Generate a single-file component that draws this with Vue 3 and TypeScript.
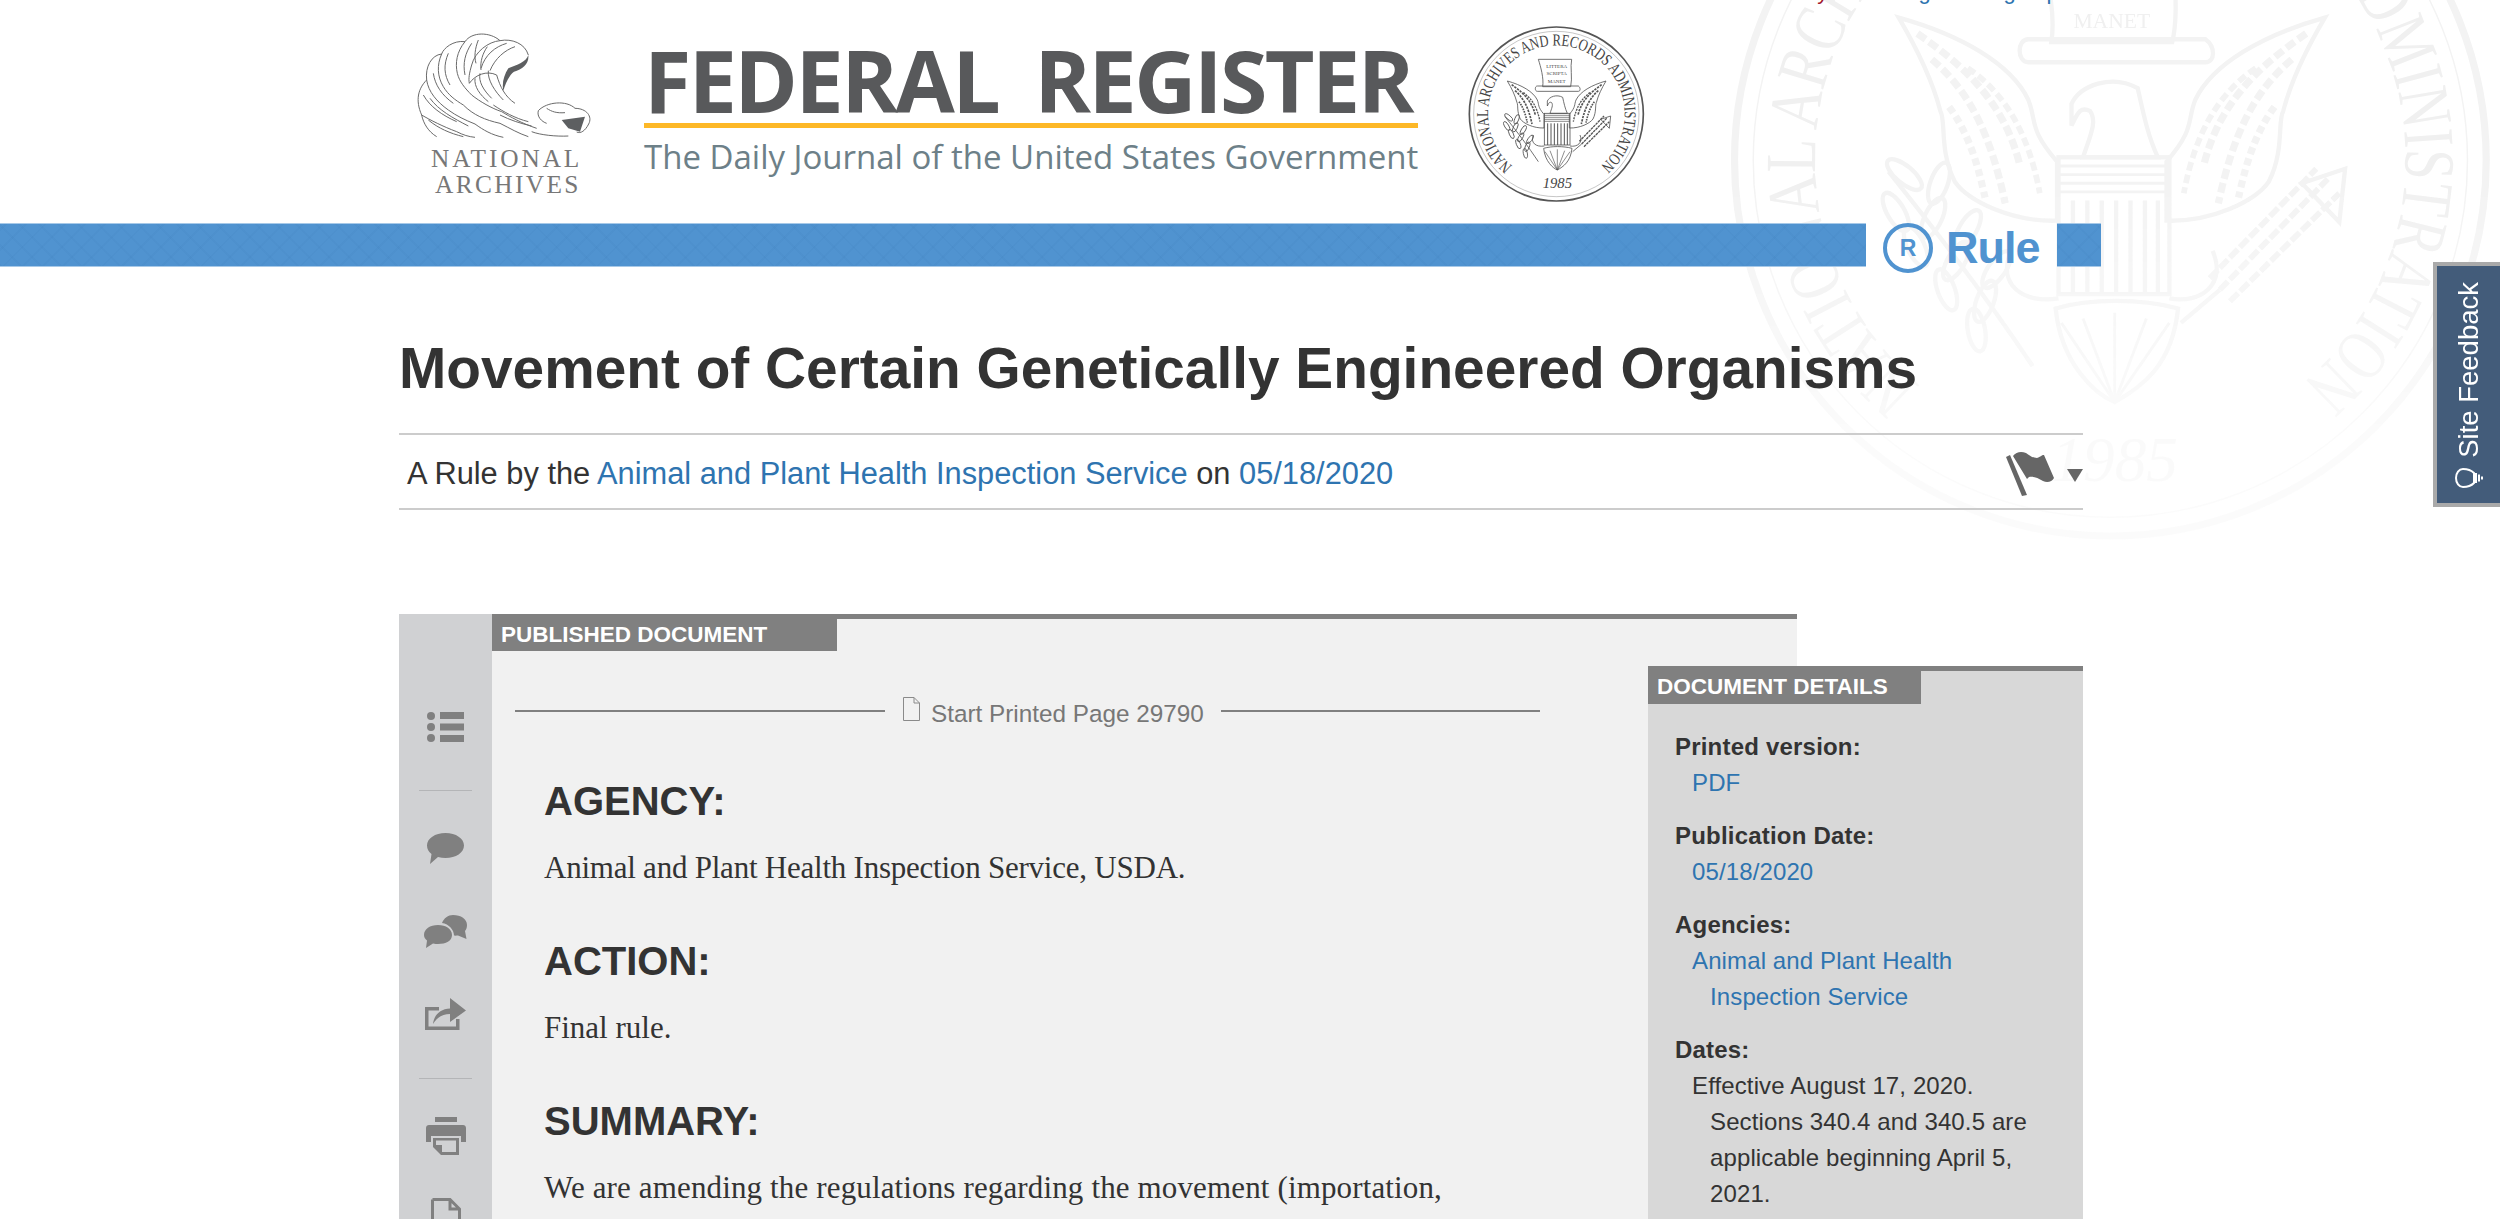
<script setup lang="ts">
interface Group { label: string; links?: string[]; lines?: string[] }

const details: Group[] = [
  { label: 'Printed version:', links: ['PDF'] },
  { label: 'Publication Date:', links: ['05/18/2020'] },
  { label: 'Agencies:', links: ['Animal and Plant Health Inspection Service'] },
  { label: 'Dates:', lines: ['Effective August 17, 2020. Sections 340.4 and 340.5 are applicable beginning April 5, 2021.'] },
]

const sections = [
  { title: 'AGENCY:', text: 'Animal and Plant Health Inspection Service, USDA.', track: -0.23 },
  { title: 'ACTION:', text: 'Final rule.', track: 0 },
  { title: 'SUMMARY:', text: 'We are amending the regulations regarding the movement (importation,', track: 0.14 },
]

const waveLines: string[] = [
  'M385 105C375 70 335 55 300 62C270 35 215 35 195 65C160 60 130 85 125 102C95 105 75 140 80 180C55 205 45 240 65 285C70 310 85 335 110 350',
  'M300 62C265 65 225 95 215 135C208 160 205 175 208 190',
  'M320 70C285 80 255 105 243 145',
  'M345 80C315 90 285 115 270 152',
  'M195 65C170 95 165 130 172 160C178 185 195 205 215 225',
  'M215 70C195 100 188 130 195 165',
  'M125 102C110 135 112 170 130 200C145 225 165 240 190 255',
  'M145 100C130 135 132 165 150 195',
  'M80 180C85 215 110 245 145 270C170 288 195 300 225 312',
  'M100 160C105 195 125 225 160 250',
  'M65 285C90 300 130 320 170 335C190 345 205 350 225 352',
  'M70 225C90 260 125 285 170 305',
  'M90 235C115 270 160 295 205 318',
  'M85 300C115 325 150 340 190 350',
  'M235 60C225 85 222 110 228 130',
  'M262 80C248 100 240 125 243 150',
  'M208 190C225 165 260 150 290 165C300 200 315 230 345 250',
  'M240 160C235 185 250 210 275 235',
  'M265 152C262 180 285 215 310 240',
  'M225 175C222 200 240 225 265 245',
  'M215 225C240 245 275 265 305 275C330 290 365 310 410 325',
  'M190 255C220 285 255 300 300 310C330 325 355 340 385 350',
  'M225 312C250 330 275 345 310 352',
  'M300 285C330 300 360 310 395 318',
  'M280 255C310 275 345 295 385 305',
  'M415 272C440 245 500 240 525 265C560 265 578 290 566 312C556 332 542 342 530 336',
  'M415 272C410 290 425 305 440 310',
  'M395 335C420 345 470 350 505 348',
  'M440 265C455 275 470 280 495 278',
]

const olive: { cx: number; cy: number; r: number }[] = [
  [176, 292, -50], [200, 298, 20], [170, 318, -30], [196, 322, 25], [220, 330, 30], [184, 342, -25], [212, 352, 30], [240, 358, 35], [205, 372, -20], [232, 380, 20], [226, 400, -10],
].map(([cx, cy, r]) => ({ cx, cy, r }))

const stripes: number[] = [293, 303, 313, 323, 333, 343, 352]
const bands: number[] = [286, 292, 298, 304]
const tail: string[] = [
  'M322 450L285 395', 'M322 450L300 392', 'M322 450L322 388', 'M322 450L344 392', 'M322 450L360 395',
]
</script>

<template>
  <div class="page">
    <svg class="defs" width="0" height="0" aria-hidden="true">
      <defs>
        <g id="wing">
          <path d="M172 183C215 195 250 215 262 240C268 255 262 260 282 283V324C250 325 220 310 211 297C200 275 205 255 201 248C195 225 185 205 172 183Z" />
          <path d="M185 194C215 215 245 240 256 285" stroke-dasharray="7 3" stroke-width="5" />
          <path d="M195 212C222 235 236 265 246 312" stroke-dasharray="7 3" stroke-width="5" />
          <path d="M207 245C222 265 228 290 232 308" stroke-dasharray="5 3" stroke-width="5" />
          <path d="M220 218C245 235 262 262 270 305" stroke-dasharray="6 3" stroke-width="4" />
        </g>
        <g id="seal">
          <circle cx="319" cy="282" r="261" stroke-width="5" />
          <circle cx="319" cy="282" r="248" stroke-width="1" />
          <path id="sealArc" d="M187.400 438.600A205 205 0 1 1 450.600 438.600" stroke="none" />
          <text class="seal-ring" fill="currentColor" stroke="none" font-size="50">
            <textPath href="#sealArc" textLength="1000" lengthAdjust="spacingAndGlyphs">NATIONAL ARCHIVES AND RECORDS ADMINISTRATION</textPath>
          </text>
          <text class="seal-year" fill="currentColor" stroke="none" x="322" y="505" text-anchor="middle" font-size="44">1985</text>
          <path d="M265 118H365C360 140 368 175 362 200H278C282 175 272 140 265 118Z" />
          <path d="M262 198H385C392 203 392 214 385 214H262C254 214 254 198 262 198Z" />
          <text class="seal-motto" fill="currentColor" stroke="none" x="320" y="144" text-anchor="middle" font-size="15">LITTERA</text>
          <text class="seal-motto" fill="currentColor" stroke="none" x="320" y="166" text-anchor="middle" font-size="15">SCRIPTA</text>
          <text class="seal-motto" fill="currentColor" stroke="none" x="320" y="190" text-anchor="middle" font-size="15">MANET</text>
          <use href="#wing" />
          <use href="#wing" transform="translate(640 0) scale(-1 1)" />
          <path d="M292 243C298 230 320 222 338 232C342 250 345 265 352 280H300C305 265 310 255 305 248C298 244 296 250 292 258Z" />
          <rect x="283" y="280" width="77" height="95" />
          <path v-for="y in bands" :key="y" :d="`M283 ${y}H360`" stroke-width="2" />
          <path v-for="x in stripes" :key="x" :d="`M${x} 310V375`" stroke-width="3" />
          <path d="M281 385C285 425 310 445 322 450C340 440 362 425 366 385C340 378 305 378 281 385Z" />
          <path v-for="d in tail" :key="d" :d="d" stroke-width="2" />
          <path d="M250 345C240 368 258 382 283 378M390 345C400 368 382 382 360 378" />
          <path d="M165 290C205 340 235 380 265 425" />
          <ellipse
            v-for="l in olive"
            :key="l.cx + l.cy"
            :cx="l.cx"
            :cy="l.cy"
            rx="6"
            ry="15"
            :transform="`rotate(${l.r} ${l.cx} ${l.cy})`"
          />
          <path d="M395 372L470 295M402 380L478 305M388 364L462 288" stroke-dasharray="8 2" stroke-width="4" />
          <path d="M395 372L368 395M452 298L482 288L478 325Z" />
        </g>
      </defs>
    </svg>

    <svg class="watermark" width="864" height="821" viewBox="0 0 600 570" aria-hidden="true">
      <use href="#seal" />
    </svg>

    <div class="toplinks">
      <a class="red">My FR</a>
      <a class="in">Sign in</a>
      <a class="up">Sign up</a>
    </div>

    <header class="masthead">
      <svg class="na-logo" width="220" height="190" viewBox="0 0 660 570" aria-label="National Archives">
        <path v-for="d in waveLines" :key="d" :d="d" />
        <path class="dark" d="M385 105C380 125 350 135 325 145C312 165 305 190 310 212C316 190 328 165 342 155C368 148 388 130 385 105Z" />
        <path class="dark" d="M485 300L555 290L540 335L505 325Z" />
        <text x="93" y="440" textLength="445">NATIONAL</text>
        <text x="105" y="519" textLength="430">ARCHIVES</text>
      </svg>

      <div class="fr-logo">
        <div class="fr-name">FEDERAL REGISTER</div>
        <div class="fr-tag">The Daily Journal of the United States Government</div>
      </div>

      <svg class="seal-logo" width="200" height="190" viewBox="0 0 600 570" aria-label="National Archives and Records Administration seal">
        <use href="#seal" />
      </svg>
    </header>

    <div class="band">
      <div class="band-bar"></div>
      <div class="band-type">
        <svg width="50" height="50" viewBox="0 0 50 50" aria-hidden="true">
          <circle cx="25" cy="25" r="23" />
          <text x="25" y="33" text-anchor="middle">R</text>
        </svg>
        <span>Rule</span>
      </div>
      <div class="band-end"></div>
    </div>

    <main class="content">
      <h1>Movement of Certain Genetically Engineered Organisms</h1>

      <div class="byline">
        <p>A Rule by the <a>Animal and Plant Health Inspection Service</a> on <a>05/18/2020</a></p>
        <div class="flag">
          <svg width="48" height="46" viewBox="0 0 48 46" aria-hidden="true">
            <path d="M0 6L4 4L21 44L16 45Z" />
            <path d="M7 5C10 1 15 0 20 2C24 5 27 7 31 7C35 6 35 4 38 4L48 27C46 31 41 32 37 30C32 27 27 25 23 26L21 28Z" />
          </svg>
          <span class="caret"></span>
        </div>
      </div>

      <div class="doc">
        <nav class="tools">
          <svg class="t-list" width="37" height="30" viewBox="0 0 37 30"><circle cx="4" cy="4" r="4" /><circle cx="4" cy="15" r="4" /><circle cx="4" cy="26" r="4" /><rect x="13" y="0" width="24" height="7" /><rect x="13" y="11.500" width="24" height="7" /><rect x="13" y="23" width="24" height="7" /></svg>
          <hr class="t-rule-a" />
          <svg class="t-comment" width="37" height="31" viewBox="0 0 37 31"><path d="M18.500 0C29 0 37 5.500 37 12.500S29 25 18.500 25C16 25 13.500 24.700 11 24L3 31L4.500 21C1.700 19 0 16 0 12.500C0 5.500 8 0 18.500 0Z" /></svg>
          <svg class="t-double" width="44" height="33" viewBox="0 0 44 33"><path d="M29 0C37 0 43 4 43 10C43 13 42 15 41 16L42.500 24L34 20.500C33 20.500 31.500 20.800 30 20.500C30 15 25 9 18 8C20 3 24 0 29 0Z" /><path d="M14 10C22 10 28 14 28 20C28 26 22 29 14 29C12.500 29 11 29 9 28.500L2 33L3 25.500C1 24 0 22 0 20C0 14 6 10 14 10Z" /></svg>
          <svg class="t-share" width="41" height="32" viewBox="0 0 41 32"><path d="M0 9H14V12.500H3.500V28.500H31V21H34.500V32H0Z" /><path d="M8 26C9 17 15 11 25 10.500V0L41 12.500L25 24V16C18 16 12 19 8 26Z" /></svg>
          <hr class="t-rule-b" />
          <svg class="t-print" width="40" height="38" viewBox="0 0 40 38"><rect x="9" y="0" width="22" height="5" /><path d="M3 8H37C38.700 8 40 9.300 40 11V25H35V19H5V25H0V11C0 9.300 1.300 8 3 8Z" /><path fill-rule="evenodd" d="M7 21H33V38H15L7 30ZM10 23.500V28H16V35H30V23.500Z" /></svg>
          <svg class="t-doc" width="30" height="40" viewBox="0 0 30 40"><path class="doc-outline" d="M1.500 1.500H19L28.500 11V40M1.500 40V1.500M19 1.500V11H28.500" /></svg>
        </nav>

        <article class="body">
          <div class="tag pub">PUBLISHED DOCUMENT</div>
          <div class="printed">
            <span class="line left"></span>
            <svg width="17" height="24" viewBox="0 0 17 24" aria-hidden="true"><path d="M.5.5H11L16.500 6V23.500H.5ZM11 .5V6H16.500" /></svg>
            <span class="printed-text">Start Printed Page 29790</span>
            <span class="line right"></span>
          </div>
          <section v-for="s in sections" :key="s.title">
            <h2>{{ s.title }}</h2>
            <p :style="{ letterSpacing: s.track + 'px' }">{{ s.text }}</p>
          </section>
        </article>

        <aside class="details">
          <div class="tag det">DOCUMENT DETAILS</div>
          <dl>
            <template v-for="g in details" :key="g.label">
              <dt>{{ g.label }}</dt>
              <dd v-for="l in g.links" :key="l"><a>{{ l }}</a></dd>
              <dd v-for="l in g.lines" :key="l">{{ l }}</dd>
            </template>
          </dl>
        </aside>
      </div>
    </main>

    <div class="feedback">
      <svg width="28" height="20" viewBox="0 0 28 20" aria-hidden="true">
        <path d="M19 5C15 1 11 1 8 1C4 1 1 5 1 10S4 19 8 19C11 19 15 19 19 15Z" />
        <path d="M21 5V15M24 6.500V13.500M27 8.500V11.500" />
      </svg>
      <span>Site Feedback</span>
    </div>
  </div>
</template>

<style>
html, body { margin: 0; height: 1219px; overflow: hidden; background: #fff; }
</style>

<style scoped>
.page {
  position: relative;
  width: 2500px;
  height: 1219px;
  overflow: hidden;
  font-family: "Liberation Sans", Arial, sans-serif;
  color: #333;
}
.defs { position: absolute; }
.watermark {
  position: absolute;
  left: 1651px;
  top: -246px;
  fill: none;
  stroke: #f3f3f3;
  stroke-width: 3;
  color: #f0f0f0;
  -webkit-mask-image: linear-gradient(#000 52%, rgba(0, 0, 0, .3) 85%);
  mask-image: linear-gradient(#000 52%, rgba(0, 0, 0, .3) 85%);
}
.seal-ring, .seal-year, .seal-motto { font-family: "Liberation Serif", serif; }
.seal-year { font-style: italic; }

.toplinks {
  position: relative;
  display: flex;
  height: 3px;
  padding-left: 1799px;
  font-size: 22px;
  line-height: 24px;
  color: #2e74b0;
  overflow: visible;
}
.toplinks a { display: block; margin-top: -20px; white-space: nowrap; }
.red { color: #a3182a; width: 100px; }
.in { width: 85px; }

.masthead {
  position: relative;
  display: flex;
  align-items: flex-start;
  height: 220px;
  padding-left: 400px;
}
.na-logo { margin-top: 17px; fill: none; stroke: #6a6a6a; stroke-width: 3; flex: none; }
.na-logo .dark { fill: #5d5f61; stroke: none; }
.na-logo text { font-family: "Liberation Serif", serif; font-size: 76px; fill: #777; stroke: none; }
.fr-logo { width: 774px; margin-left: 24px; margin-top: 25px; flex: none; }
.fr-name {
  white-space: nowrap;
  font-family: "Open Sans", sans-serif;
  font-weight: 700;
  font-size: 86px;
  line-height: 104px;
  color: #58595b;
  border-bottom: 5px solid #fdb827;
  letter-spacing: -2.500px;
  word-spacing: 16px;
  height: 95px;
  margin-left: 0;
}
.fr-tag {
  font-family: "Open Sans", sans-serif;
  font-size: 33px;
  line-height: 44px;
  margin-top: 7px;
  color: #6d8088;
  white-space: nowrap;
}
.seal-logo { margin-left: 32px; margin-top: 17px; fill: none; stroke: #555; stroke-width: 2.500; color: #444; flex: none; }

.band { position: relative; display: flex; align-items: center; height: 44px; }
.band-bar, .band-end {
  height: 44px;
  box-sizing: border-box;
  background-color: #5093d0;
  background-image:
    repeating-linear-gradient(45deg, rgba(40, 100, 160, .06) 0 2px, transparent 2px 14px),
    repeating-linear-gradient(-45deg, rgba(40, 100, 160, .06) 0 2px, transparent 2px 14px);
  border-top: 1px solid #a7c9e8;
  border-bottom: 1px solid #a7c9e8;
}
.band-bar { width: 1866px; }
.band-end { width: 44px; }
.band-type { display: flex; align-items: center; width: 191px; padding-left: 17px; box-sizing: border-box; color: #5093d0; }
.band-type svg { fill: none; stroke: #5093d0; stroke-width: 4; flex: none; margin-top: 6px; }
.band-type svg text { fill: #5093d0; stroke: none; font-weight: 700; font-size: 23px; }
.band-type span { font-weight: 700; font-size: 45px; line-height: 50px; letter-spacing: -1px; margin-left: 13px; margin-top: 6px; }

.content { position: relative; width: 1684px; margin-left: 399px; }
h1 {
  margin: 70px 0 32px;
  font-size: 56.800px;
  line-height: 64px;
  font-weight: 700;
  color: #333;
  white-space: nowrap;
}
.byline {
  display: flex;
  align-items: center;
  justify-content: space-between;
  height: 73px;
  border-top: 2px solid #ccc;
  border-bottom: 2px solid #ccc;
}
.byline p { margin: 4px 0 0 8px; font-size: 30.800px; line-height: 40px; color: #333; }
a { color: #2e74b0; }
.flag { display: flex; align-items: center; }
.flag svg { fill: #666; margin-top: 5px; }
.caret {
  width: 0;
  height: 0;
  margin-left: 13px;
  margin-top: 8px;
  border-left: 8px solid transparent;
  border-right: 8px solid transparent;
  border-top: 13px solid #666;
}

.doc { display: flex; align-items: flex-start; margin-top: 104px; height: 700px; }
.tools {
  width: 93px;
  flex: none;
  height: 700px;
  padding-top: 98px;
  box-sizing: border-box;
  background: #d0d1d3;
  display: flex;
  flex-direction: column;
  align-items: center;
}
.tools svg { display: block; flex: none; fill: #808080; }
.tools hr { width: 53px; height: 1px; border: 0; margin: 0; background: #b4b5b7; flex: none; }
.t-rule-a { margin-top: 48px !important; }
.t-comment { margin-top: 42px; }
.t-double { margin-top: 51px; }
.t-share { margin-top: 50px; }
.t-rule-b { margin-top: 48px !important; }
.t-print { margin-top: 38px; }
.t-doc { margin-top: 43px; }
.doc-outline { fill: none; stroke: #808080; stroke-width: 3; }

.body {
  width: 1305px;
  flex: none;
  height: 700px;
  box-sizing: border-box;
  background: #f1f1f1;
  border-top: 5px solid #808080;
}
.tag {
  box-sizing: border-box;
  background: #808080;
  color: #fff;
  font-weight: 700;
  font-size: 22.500px;
  line-height: 32px;
  padding-left: 9px;
  white-space: nowrap;
}
.pub { width: 345px; height: 32px; }
.printed {
  display: flex;
  align-items: center;
  height: 30px;
  margin: 45px 0 51px 23px;
  color: #777;
  font-size: 24.300px;
}
.line { height: 2px; background: #808080; flex: none; }
.line.left { width: 370px; margin-right: 18px; }
.line.right { width: 319px; margin-left: 17px; }
.printed svg { fill: none; stroke: #8a8a8a; stroke-width: 1; flex: none; margin-top: -5px; }
.printed-text { margin-left: 11px; line-height: 30px; margin-top: 6px; white-space: nowrap; }
section { padding-left: 52px; }
h2 { margin: 0 0 20px; font-size: 40px; line-height: 48px; font-weight: 700; color: #333; }
section p {
  margin: 0 0 47px;
  font-family: "Liberation Serif", serif;
  font-size: 31px;
  line-height: 45px;
  color: #333;
  white-space: nowrap;
}

.details {
  width: 435px;
  flex: none;
  margin-left: -149px;
  margin-top: 52px;
  height: 650px;
  box-sizing: border-box;
  background: #d8d8d8;
  border-top: 5px solid #808080;
  position: relative;
}
.det { width: 273px; height: 33px; line-height: 32px; }
dl { margin: 25px 0 0; padding: 0 40px 0 27px; font-size: 24px; line-height: 36px; }
dt { font-weight: 700; color: #333; margin-top: 17px; letter-spacing: .2px; }
dt:first-child { margin-top: 0; }
dd { margin: 0; padding-left: 35px; text-indent: -18px; color: #333; letter-spacing: .12px; }

.feedback {
  position: absolute;
  right: 0;
  top: 262px;
  width: 67px;
  height: 245px;
  box-sizing: border-box;
  background: #435c7a;
  border: 4px solid #a9a9a9;
  border-right: 0;
  color: #fff;
  display: flex;
  flex-direction: column-reverse;
  align-items: center;
  padding-bottom: 15px;
}
.feedback span {
  writing-mode: vertical-rl;
  transform: rotate(180deg);
  font-size: 27.500px;
  line-height: 32px;
  margin-bottom: 10px;
}
.feedback svg { fill: none; stroke: #fff; stroke-width: 2; flex: none; }
</style>
